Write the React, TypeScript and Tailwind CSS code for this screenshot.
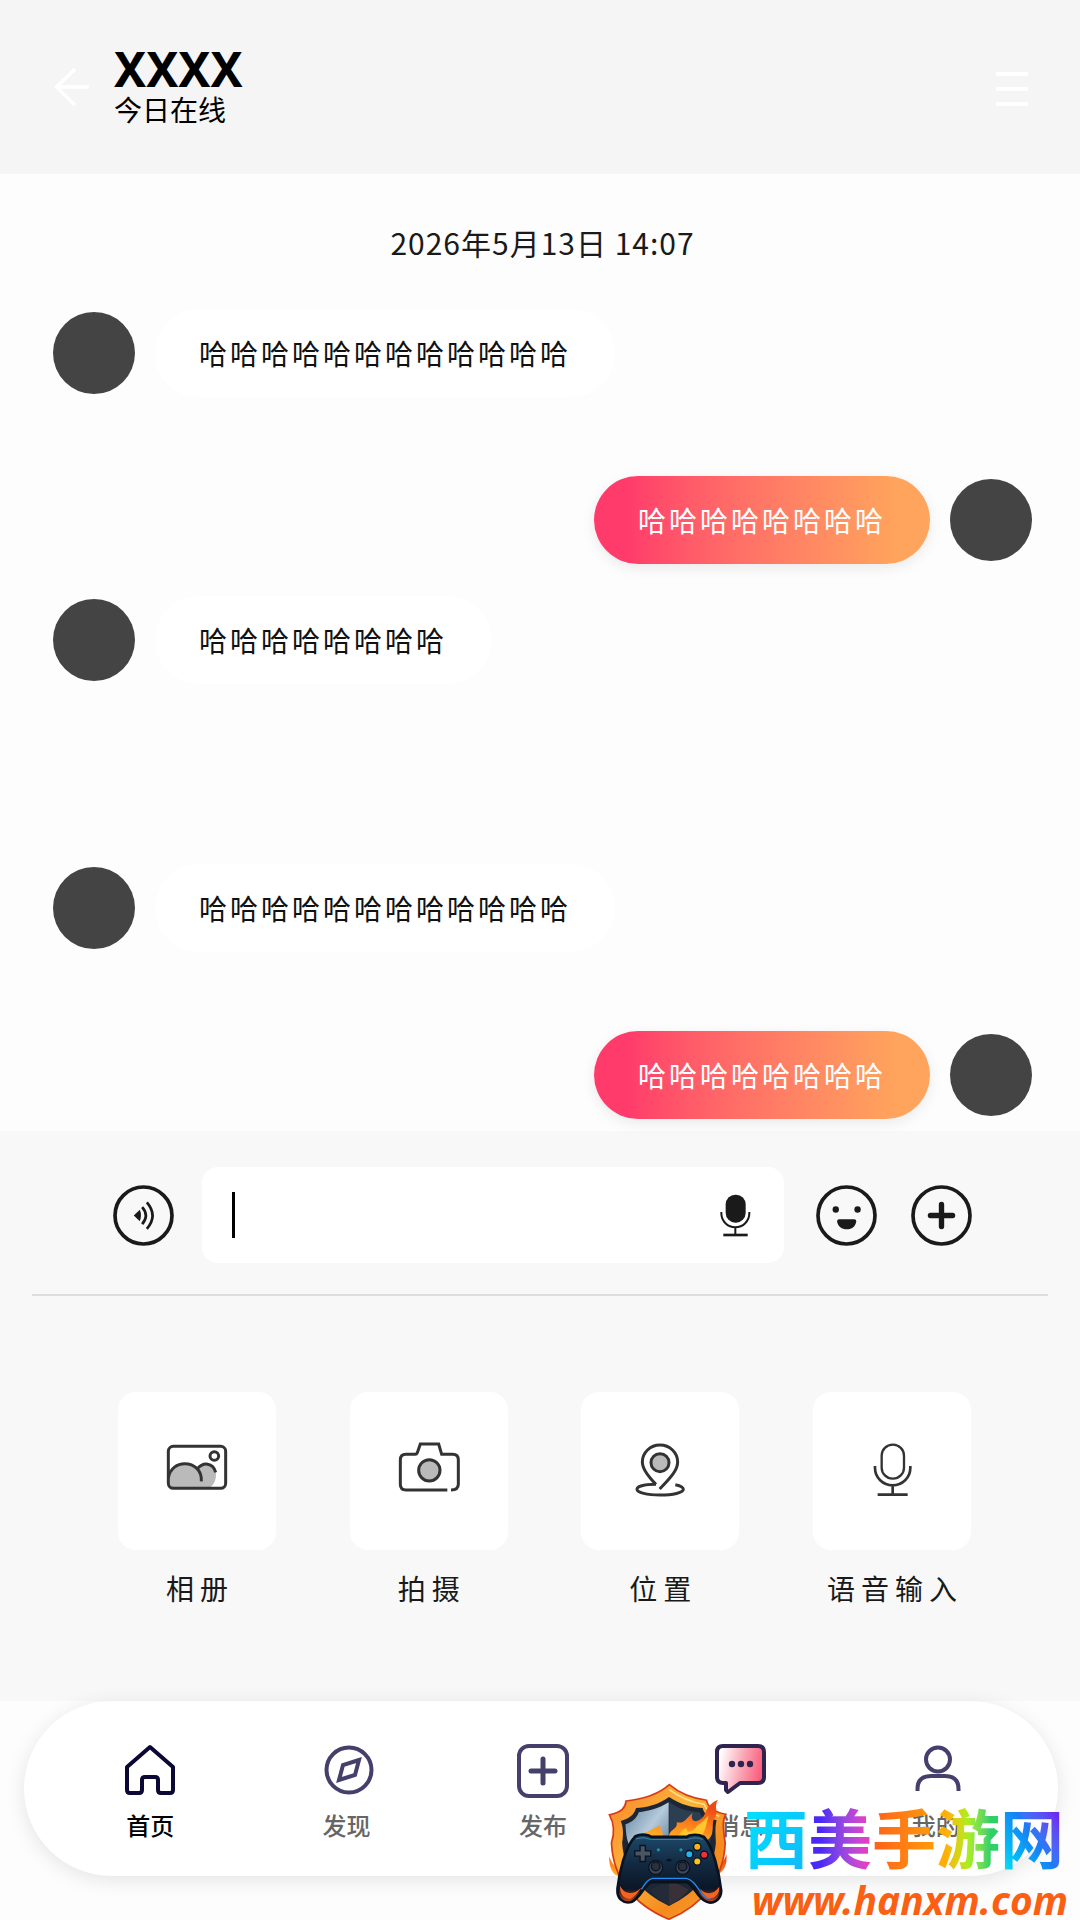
import React from 'react';

interface Message {
  id: number;
  text: string;
  mine: boolean;
  spacing: string;
}

interface NavItem {
  label: string;
  icon: React.ReactNode;
  active?: boolean;
}

const MESSAGES: Message[] = [
  { id: 1, text: '哈哈哈哈哈哈哈哈哈哈哈哈', mine: false, spacing: 'mt-[47px]' },
  { id: 2, text: '哈哈哈哈哈哈哈哈', mine: true, spacing: 'mt-[79px]' },
  { id: 3, text: '哈哈哈哈哈哈哈哈', mine: false, spacing: 'mt-8' },
  { id: 4, text: '哈哈哈哈哈哈哈哈哈哈哈哈', mine: false, spacing: 'mt-45' },
  { id: 5, text: '哈哈哈哈哈哈哈哈', mine: true, spacing: 'mt-[79px]' },
];

const BackIcon = () => (
  <svg className="w-9 h-10" viewBox="0 0 36 40" fill="none" stroke="#fff" strokeWidth="3.5">
    <path d="M35 20H3M21 2 2.5 20 21 38" />
  </svg>
);

const MenuIcon = () => (
  <svg className="w-8 h-10" viewBox="0 0 32 40" fill="#fff">
    <path d="M0 5h32v4H0zM0 20h32v4H0zM0 35h32v4H0z" />
  </svg>
);

const VoiceIcon = () => (
  <svg className="w-[61px] h-[61px]" viewBox="160 194 182 182" fill="none" stroke="#1a1a1a">
    <circle cx="251" cy="285" r="85" strokeWidth="11" />
    <path d="M222 285 240 268Q247 285 240 302Z" fill="#1a1a1a" stroke="none" />
    <path d="M247 260Q269 285 247 311M261 246Q295 285 261 325" strokeWidth="8" />
  </svg>
);

const SolidMicIcon = () => (
  <svg className="w-[31px] h-[43px]" viewBox="479 226 93 129" fill="none" stroke="#1a1a1a" strokeWidth="6">
    <rect x="496" y="228" width="60" height="84" rx="29" fill="#1a1a1a" stroke="none" />
    <path d="M483 280V284A42 42 0 0 0 567 284V280M525 325V348" />
    <path d="M489 349H562" strokeWidth="8" />
  </svg>
);

const SmileIcon = () => (
  <svg className="w-[61px] h-[61px]" viewBox="766 195 182 182" fill="none">
    <circle cx="857" cy="286" r="85" stroke="#1a1a1a" strokeWidth="11" />
    <circle cx="825" cy="268" r="9.5" fill="#1a1a1a" />
    <circle cx="890" cy="268" r="9.5" fill="#1a1a1a" />
    <path d="M835 297H880Q886 297 886 303C884 319 873 327 858 327S831 319 829 303Q829 297 835 297Z" fill="#1a1a1a" />
  </svg>
);

const PlusIcon = () => (
  <svg className="w-[61px] h-[61px]" viewBox="1054 195 182 182" fill="none" stroke="#1a1a1a" strokeLinecap="round">
    <circle cx="1145" cy="286" r="85" strokeWidth="11" />
    <path d="M1145 253V319M1112 286H1178" strokeWidth="16" />
  </svg>
);

const AlbumIcon = () => (
  <svg className="w-[66px] h-[66px]" viewBox="193 202 198 198" fill="none" stroke="#333" strokeWidth="9">
    <path d="M210 320C218 290 236 280 255 280 274 280 286 286 293 296 304 283 315 279 323 279 344 284 351 300 349 314 348 336 338 346 328 353H222Q208 350 208 338Z" fill="#bababa" stroke="none" />
    <rect x="206" y="227" width="172" height="126" rx="15" />
    <circle cx="344" cy="256" r="13" />
    <path d="M206 322C211 292 234 279 255 279 284 279 307 299 305 332M292 296C310 273 340 275 348 305" />
  </svg>
);

const CameraIcon = () => (
  <svg className="w-[66px] h-[66px]" viewBox="887 202 198 198" fill="none" stroke="#333" strokeWidth="9">
    <path d="M1041 358H917Q900 358 900 341V268Q900 251 917 251H945Q949 251 951 246L960 220H1015L1024 251H1057Q1074 251 1074 268V341Q1074 358 1052 358" />
    <circle cx="987" cy="299" r="32" fill="#bababa" />
  </svg>
);

const LocationIcon = () => (
  <svg className="w-[66px] h-[66px]" viewBox="262 202 198 198" fill="none" stroke="#333" strokeWidth="9">
    <path d="M349 341C326 318 308 296 308 274A53 51 0 0 1 414 274C414 296 398 316 360 355" />
    <circle cx="361" cy="276" r="27" fill="#bababa" />
    <path d="M349 341C312 341 292 347 292 356 292 366 322 373 361 373S431 366 431 356C431 349 422 345 407 342" />
  </svg>
);

const MicIcon = () => (
  <svg className="w-[66px] h-[66px]" viewBox="960 202 198 198" fill="none" stroke="#333" strokeWidth="8">
    <rect x="1028" y="222" width="67" height="102" rx="33" strokeWidth="7" />
    <path d="M1008 286V292A53 52 0 0 0 1114 292V286M1061 345V370M1016 372H1106" />
  </svg>
);

const HomeIcon = () => (
  <svg className="w-14 h-14" viewBox="0 0 56 56" fill="none" stroke="#0b0836" strokeWidth="4" strokeLinejoin="round">
    <path d="M5 24 28 4 51 24V47Q51 50 48 50H39Q36 50 36 47V37Q36 34 33 34H23Q20 34 20 37V47Q20 50 17 50H8Q5 50 5 47Z" />
  </svg>
);

const DiscoverIcon = () => (
  <svg className="w-14 h-14" viewBox="0 0 56 56" fill="none" stroke="#45406b" strokeWidth="4">
    <circle cx="30" cy="27" r="22.5" />
    <path d="M40 17 24 22 20 37 36 32Z" />
  </svg>
);

const PublishIcon = () => (
  <svg className="w-14 h-14" viewBox="0 0 56 56" fill="none" stroke="#45406b" strokeWidth="4">
    <rect x="4" y="3" width="48" height="50" rx="10" />
    <path d="M28 16V40M16 28H40" strokeWidth="5" strokeLinecap="round" />
  </svg>
);

const MessageIcon = () => (
  <svg className="w-14 h-14" viewBox="0 0 56 56">
    <defs>
      <linearGradient id="bubble" x1="0" y1="0" x2="1" y2="0.2">
        <stop offset="0.1" stopColor="#fff" />
        <stop offset="0.6" stopColor="#f9a4b3" />
        <stop offset="1" stopColor="#fb5f7e" />
      </linearGradient>
    </defs>
    <path d="M12 3H47Q53 3 53 9V34Q53 40 47 40H29L17 49 15 47V40H12Q6 40 6 34V9Q6 3 12 3Z" fill="url(#bubble)" stroke="#2f2350" strokeWidth="4" strokeLinejoin="round" />
    <g fill="#2f2350">
      <circle cx="21" cy="21" r="3.2" />
      <circle cx="30" cy="21" r="3.2" />
      <circle cx="39" cy="21" r="3.2" />
    </g>
  </svg>
);

const ProfileIcon = () => (
  <svg className="w-14 h-14" viewBox="0 0 56 56" fill="none" stroke="#45406b" strokeWidth="4">
    <circle cx="30" cy="16.5" r="12" />
    <path d="M9.5 48V46Q9.5 33 23 33H37Q50.500 33 50.500 46V48" />
  </svg>
);

const SiteLogo = () => (
  <svg className="w-[120px] h-[138px] shrink-0" viewBox="50 270 360 415">
    <defs>
      <linearGradient id="gold" x1="0" y1="0" x2="1" y2="1">
        <stop offset="0" stopColor="#f9822b" />
        <stop offset="0.4" stopColor="#fbb63a" />
        <stop offset="0.7" stopColor="#f58a1f" />
        <stop offset="1" stopColor="#f6a52c" />
      </linearGradient>
      <linearGradient id="steel" x1="0" y1="0" x2="1" y2="1">
        <stop offset="0" stopColor="#5f7f99" />
        <stop offset="0.5" stopColor="#b5cbdc" />
        <stop offset="1" stopColor="#4d6c86" />
      </linearGradient>
      <linearGradient id="flame" x1="0" y1="1" x2="0.4" y2="0">
        <stop offset="0" stopColor="#ffc02e" />
        <stop offset="0.5" stopColor="#ff8a1c" />
        <stop offset="1" stopColor="#ee4a16" />
      </linearGradient>
      <linearGradient id="pad" x1="0" y1="0" x2="0" y2="1">
        <stop offset="0" stopColor="#1d4a6b" />
        <stop offset="0.45" stopColor="#12283f" />
        <stop offset="0.8" stopColor="#0b1626" />
        <stop offset="1" stopColor="#d44a18" />
      </linearGradient>
    </defs>
    <path d="M54 490C60 512 70 520 84 528L100 560 70 545C56 530 52 510 54 490ZM406 484C408 512 402 536 372 550L372 528C392 518 400 500 406 484Z" fill="url(#flame)" />
    <path d="M234 275C266 302 300 316 346 322 350 342 364 356 404 364 392 384 396 408 402 450 398 560 330 640 233 680 138 640 66 570 60 450 70 420 68 392 54 366 92 358 102 344 104 324 160 318 204 302 234 275Z" fill="url(#gold)" stroke="#d83a14" strokeWidth="5" />
    <path d="M234 290C264 312 298 328 338 334 346 352 358 362 384 370" fill="none" stroke="#ffe08a" strokeWidth="5" />
    <path d="M233 312C270 336 304 344 334 345 340 366 354 376 376 382 370 408 374 430 374 450 366 540 316 600 233 640 150 600 98 540 92 450 96 426 96 404 88 384 112 378 128 366 134 345 164 344 200 336 233 312Z" fill="#1c2635" />
    <path d="M232 328C200 348 170 354 142 358 136 376 122 388 102 394 106 450 106 500 232 500Z" fill="url(#steel)" />
    <path d="M234 328C262 348 292 356 324 358 334 376 346 386 364 392 360 450 356 500 234 500Z" fill="#2c3e52" />
    <path d="M176 592 233 560 292 590C276 612 256 626 233 638 210 626 192 612 176 592Z" fill="#242b38" />
    <path d="M233 560 292 590C276 612 256 626 233 638Z" fill="#3a3138" />
    <path d="M140 425C160 422 184 408 208 396 202 410 216 408 214 430L234 436C228 410 262 410 256 388 280 394 286 374 304 360 296 380 310 392 326 380 350 366 336 340 380 320 366 346 384 352 372 372 360 390 368 400 362 424 350 450 330 448 316 442L150 440Z" fill="url(#flame)" />
    <path d="M250 436C272 424 270 406 286 406 284 424 306 418 318 398 330 390 340 382 352 368 344 400 340 430 316 442Z" fill="#ffc52e" />
    <path d="M132 430Q150 422 172 428L180 432H286L294 428Q318 422 338 432C366 462 384 540 390 594 390 622 364 636 344 626 320 616 312 584 288 568H178C154 584 146 616 120 628 96 634 76 618 78 588 84 538 100 464 132 430Z" fill="url(#pad)" stroke="#0a121f" strokeWidth="8" />
    <path d="M134 438Q154 430 180 440H288Q316 430 334 440" fill="none" stroke="#3d7fa6" strokeWidth="3" />
    <path d="M150 590C164 568 170 560 184 557H286C310 564 318 586 334 606 352 628 372 610 382 594" fill="none" stroke="#248cf0" strokeWidth="4" />
    <path d="M86 580C84 600 94 620 118 618 132 610 142 596 150 584 126 608 100 606 86 580ZM384 582C386 604 370 620 350 616 338 608 332 600 326 588 346 608 368 606 384 582Z" fill="#f4641e" />
    <path d="M146 458H162V474H178V490H162V506H146V490H130V474H146Z" fill="#4a5563" stroke="#0a121f" strokeWidth="4" />
    <g stroke="#0a121f" strokeWidth="4">
      <circle cx="193" cy="524" r="21" fill="#3b4656" />
      <circle cx="193" cy="521" r="13" fill="#273140" />
      <circle cx="274" cy="524" r="21" fill="#3b4656" />
      <circle cx="274" cy="521" r="13" fill="#273140" />
      <circle cx="318" cy="462" r="11" fill="#fdb51d" />
      <circle cx="318" cy="506" r="11" fill="#fdc21d" />
      <circle cx="294" cy="484" r="11" fill="#25b4ea" />
      <circle cx="339" cy="486" r="11" fill="#ee3038" />
    </g>
    <circle cx="201" cy="471" r="5" fill="#1f8fb0" />
    <circle cx="269" cy="471" r="5" fill="#1f8fb0" />
    <ellipse cx="233" cy="502" rx="8" ry="4" fill="#0a121f" />
  </svg>
);

const ACTIONS = [
  { label: '相册', icon: <AlbumIcon /> },
  { label: '拍摄', icon: <CameraIcon /> },
  { label: '位置', icon: <LocationIcon /> },
  { label: '语音输入', icon: <MicIcon /> },
];

const NAV_ITEMS: NavItem[] = [
  { label: '首页', icon: <HomeIcon />, active: true },
  { label: '发现', icon: <DiscoverIcon /> },
  { label: '发布', icon: <PublishIcon /> },
  { label: '消息', icon: <MessageIcon /> },
  { label: '我的', icon: <ProfileIcon /> },
];

const ChatMessage: React.FC<{ message: Message }> = ({ message }) => (
  <li className={`flex items-center gap-5 ${message.spacing} ${message.mine ? 'flex-row-reverse' : ''}`}>
    <div className="w-[82px] h-[82px] shrink-0 rounded-full bg-[#444]" />
    <p
      className={`px-11 py-6 rounded-full text-[28px] leading-10 tracking-[3px] ${
        message.mine
          ? 'text-white bg-linear-to-r from-[#ff3b6b] from-10% to-[#ffa45c] to-90% shadow-[0_4px_14px_rgba(0,0,0,0.08)]'
          : 'text-[#111] bg-white'
      }`}
    >
      {message.text}
    </p>
  </li>
);

export default function App() {
  return (
    <div className="bg-[#fdfdfd] text-[#1a1a1a] font-['Noto_Sans_CJK_SC',sans-serif]">
      <header className="flex items-center h-[174px] pl-[54px] pr-[52px] bg-[#f5f5f5]">
        <button aria-label="返回">
          <BackIcon />
        </button>
        <div className="flex-1 ml-6 text-black">
          <h1 className="font-['Noto_Sans',sans-serif] text-5xl leading-11 font-bold">XXXX</h1>
          <p className="text-[28px] leading-9">今日在线</p>
        </div>
        <button aria-label="菜单">
          <MenuIcon />
        </button>
      </header>

      <main className="pt-12 pl-[53px] pr-12 pb-3">
        <time className="block text-center text-[30px] leading-10 tracking-[1px]">2026年5月13日 14:07</time>
        <ul>
          {MESSAGES.map(message => (
            <ChatMessage key={message.id} message={message} />
          ))}
        </ul>
      </main>

      {/* 输入面板 */}
      <section className="pt-9 pb-[93px] bg-[#f8f8f8]">
        <div className="flex items-center pl-[113px] pr-[108px]">
          <button aria-label="语音">
            <VoiceIcon />
          </button>
          <div className="flex flex-1 items-center h-24 ml-7 mr-8 pl-[30px] pr-[33px] rounded-2xl bg-white">
            <span className="w-[3px] h-[46px] bg-black" />
            <input
              type="text"
              aria-label="输入消息"
              className="flex-1 min-w-0 h-full px-2 text-[28px] caret-transparent outline-none"
            />
            <button aria-label="语音输入">
              <SolidMicIcon />
            </button>
          </div>
          <div className="flex gap-[34px]">
            <button aria-label="表情">
              <SmileIcon />
            </button>
            <button aria-label="更多">
              <PlusIcon />
            </button>
          </div>
        </div>

        <hr className="mx-8 mt-[31px] border-t-2 border-[#dedede]" />

        <div className="flex justify-between mt-24 pl-[118px] pr-[109px]">
          {ACTIONS.map(action => (
            <button key={action.label} className="flex flex-col items-center gap-[18px]">
              <span className="flex items-center justify-center w-[158px] h-[158px] rounded-[18px] bg-white">
                {action.icon}
              </span>
              <span className="pl-1.5 text-[28px] leading-10 tracking-[6px]">{action.label}</span>
            </button>
          ))}
        </div>
      </section>

      {/* 底部导航 */}
      <footer className="relative pl-6 pr-[22px] pb-[45px]">
        <nav className="flex h-[175px] pl-7 pr-6 pt-[42px] rounded-full bg-white shadow-[0_4px_20px_rgba(0,0,0,0.1)]">
          {NAV_ITEMS.map(item => (
            <a key={item.label} href="#" className="flex flex-1 flex-col items-center gap-2.5">
              {item.icon}
              <span className={`text-2xl leading-8 font-medium ${item.active ? 'text-black' : 'text-[#666]'}`}>
                {item.label}
              </span>
            </a>
          ))}
        </nav>

        <div className="absolute right-3 bottom-0 flex items-end gap-4">
          <SiteLogo />
          <div className="flex flex-col items-end">
            <p className="mr-1 mb-1 text-[64px] leading-20 font-bold">
              <span className="text-transparent bg-clip-text bg-linear-to-br from-[#00e8ff] to-[#12b4f8]">西</span>
              <span className="text-transparent bg-clip-text bg-linear-to-r from-[#4a28f5] from-20% to-[#e23fc8] to-90%">美</span>
              <span className="text-transparent bg-clip-text bg-linear-to-r from-[#ff5e1a] to-[#ff9c08]">手</span>
              <span className="text-transparent bg-clip-text bg-linear-to-r from-[#ffae08] from-15% via-[#a8ee1e] to-[#2fd068] to-85%">游</span>
              <span className="text-transparent bg-clip-text bg-linear-to-tr from-[#10dcf5] from-10% via-[#1a7cf5] to-[#6a2af0] to-80%">网</span>
            </p>
            <a href="#" className="font-['Noto_Sans',sans-serif] text-[39px] leading-[42px] font-bold italic text-[#fb5f14]">
              www.hanxm.com
            </a>
          </div>
        </div>
      </footer>
    </div>
  );
}
